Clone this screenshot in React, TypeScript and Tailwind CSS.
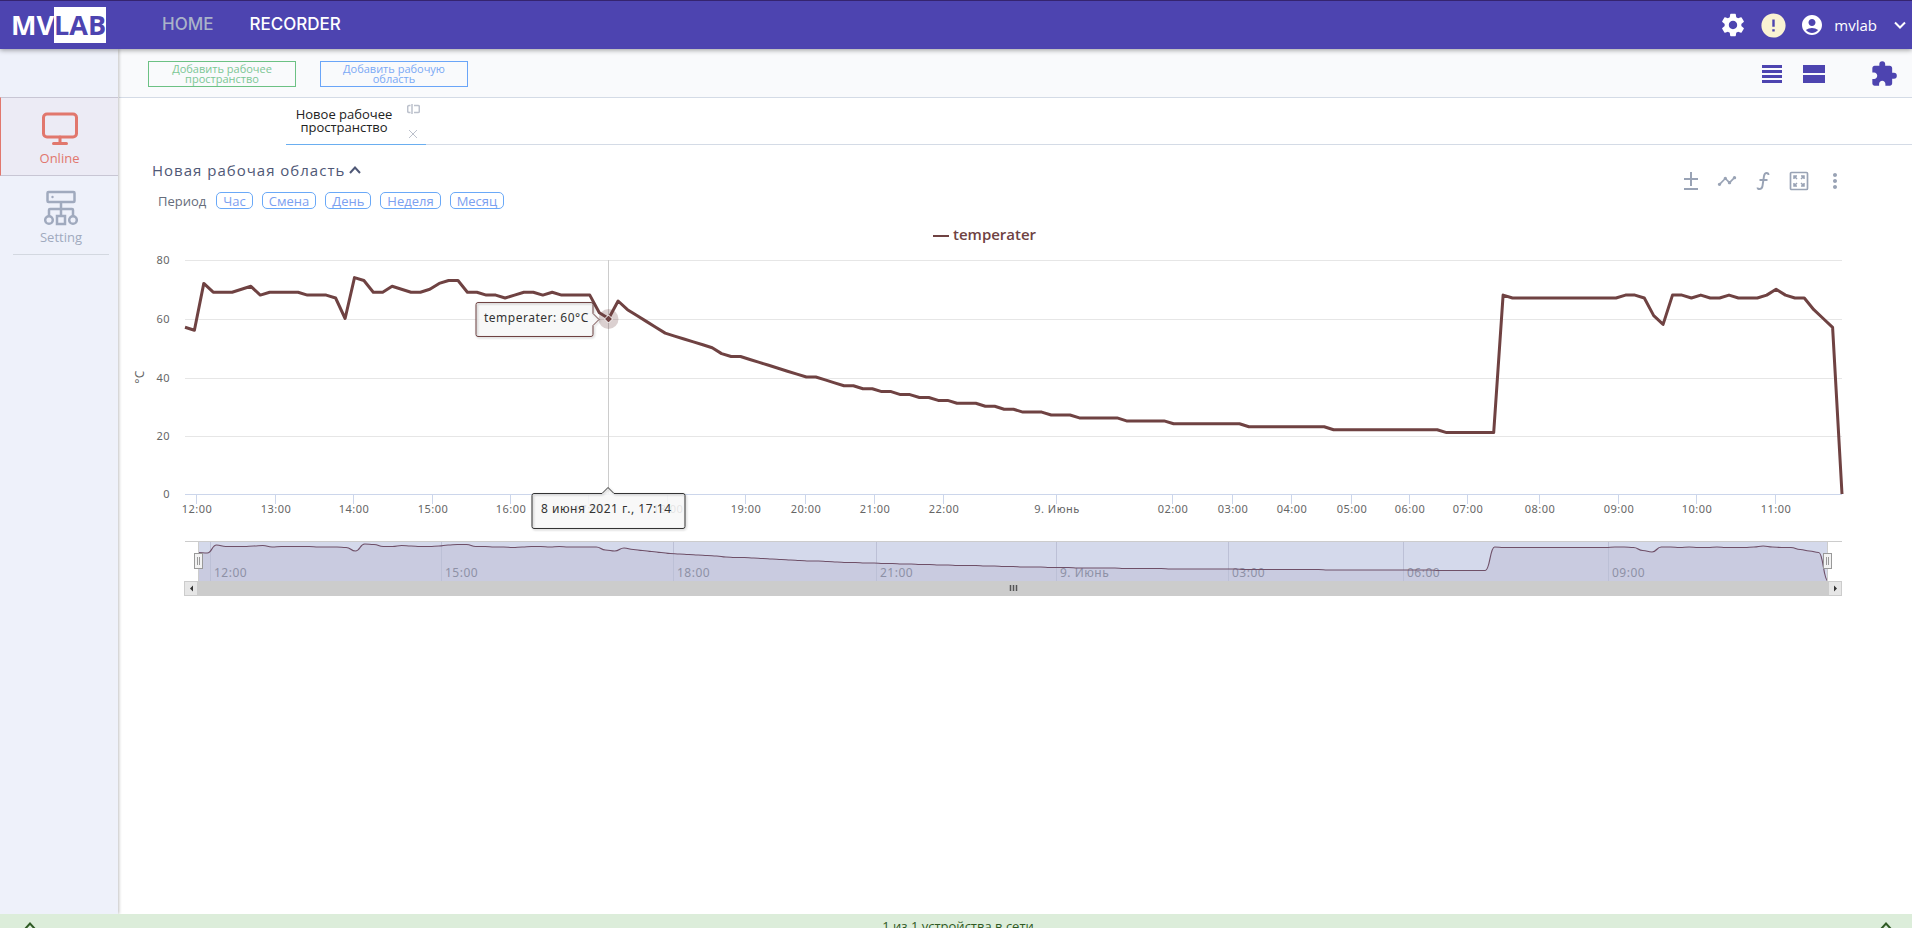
import type { ReactNode } from 'react';
import {
  MdSettings,
  MdError,
  MdAccountCircle,
  MdExtension,
  MdTimeline,
  MdMoreVert,
} from 'react-icons/md';

const PLOT_LEFT = 66;
const PLOT_WIDTH = 1657;
const PLOT_BOTTOM = 274;
const NAV_LEFT = 79;
const NAV_WIDTH = 1630;
const NAV_TOP = 321;
const NAV_BOTTOM = 361;

// [value, how many samples in a row]
const SAMPLES: [number, number][] = [
  [57, 1], [56, 1], [72, 1], [69, 3], [70, 1], [71, 1], [68, 1], [69, 4], [68, 3], [67, 1],
  [60, 1], [74, 1], [73, 1], [69, 2], [71, 1], [70, 1], [69, 2], [70, 1], [72, 1], [73, 2],
  [69, 2], [68, 2], [67, 1], [68, 1], [69, 2], [68, 1], [69, 1], [68, 4], [62, 1], [60, 1],
  [66, 1], [63, 1], [61, 1], [59, 1], [57, 1], [55, 1], [54, 1], [53, 1], [52, 1], [51, 1],
  [50, 1], [48, 1], [47, 2], [46, 1], [45, 1], [44, 1], [43, 1], [42, 1], [41, 1], [40, 2],
  [39, 1], [38, 1], [37, 2], [36, 2], [35, 2], [34, 2], [33, 2], [32, 2], [31, 3], [30, 2],
  [29, 2], [28, 3], [27, 3], [26, 5], [25, 5], [24, 8], [23, 9], [22, 12], [21, 6], [68, 1],
  [67, 12], [68, 2], [67, 1], [61, 1], [58, 1], [68, 2], [67, 1], [68, 1], [67, 2], [68, 1],
  [67, 3], [68, 1], [70, 1], [68, 1], [67, 2], [63, 1], [60, 1], [57, 1], [0, 1],
];

const VALUES = SAMPLES.flatMap(([value, count]) => Array<number>(count).fill(value));

const Y_TICKS = [
  { label: '80', y: 40 },
  { label: '60', y: 99 },
  { label: '40', y: 158 },
  { label: '20', y: 216 },
];

const X_TICKS = [
  { label: '12:00', x: 77 },
  { label: '13:00', x: 156 },
  { label: '14:00', x: 234 },
  { label: '15:00', x: 313 },
  { label: '16:00', x: 391 },
  { label: '17:00', x: 469 },
  { label: '18:00', x: 548 },
  { label: '19:00', x: 626 },
  { label: '20:00', x: 686 },
  { label: '21:00', x: 755 },
  { label: '22:00', x: 824 },
  { label: '9. Июнь', x: 937 },
  { label: '02:00', x: 1053 },
  { label: '03:00', x: 1113 },
  { label: '04:00', x: 1172 },
  { label: '05:00', x: 1232 },
  { label: '06:00', x: 1290 },
  { label: '07:00', x: 1348 },
  { label: '08:00', x: 1420 },
  { label: '09:00', x: 1499 },
  { label: '10:00', x: 1577 },
  { label: '11:00', x: 1656 },
];

const NAV_TICKS = [
  { label: '12:00', x: 91 },
  { label: '15:00', x: 322 },
  { label: '18:00', x: 554 },
  { label: '21:00', x: 757 },
  { label: '9. Июнь', x: 937 },
  { label: '03:00', x: 1109 },
  { label: '06:00', x: 1284 },
  { label: '09:00', x: 1489 },
];

const TOOLTIPS = [
  {
    text: 'temperater: 60°C',
    x: 365,
    y: 102,
    color: '#6f4242',
    box: 'M359 82.5h113q2 0 2 2v9l6 6-6 6v9q0 2-2 2H359q-2 0-2-2v-30q0-2 2-2z',
  },
  {
    text: '8 июня 2021 г., 17:14',
    x: 422,
    y: 293,
    color: '#333',
    box: 'M415 273.5h68l6-6 6 6h69q2 0 2 2v31q0 2-2 2H415q-2 0-2-2v-31q0-2 2-2z',
  },
];

const PERIODS = ['Час', 'Смена', 'День', 'Неделя', 'Месяц'];

function scale(left: number, width: number, bottom: number, unit: number) {
  const step = width / (VALUES.length - 1);
  return VALUES.map((v, i) => [left + i * step, bottom - v * unit]);
}

function linePath(points: number[][]) {
  return 'M' + points.map(([x, y]) => `${x.toFixed(1)} ${y.toFixed(1)}`).join('L');
}

function splinePath(points: number[][]) {
  return points
    .map(([x, y], i) => {
      if (i === 0) return `M${x} ${y}`;
      const [px, py] = points[i - 1];
      const mid = (px + x) / 2;
      return `C${mid} ${py} ${mid} ${y} ${x} ${y}`;
    })
    .join('');
}

function Chevron({ className, down }: { className?: string; down?: boolean }) {
  return (
    <svg viewBox="0 0 12 8" className={className} fill="none" stroke="currentColor" strokeWidth="2">
      <path d={down ? 'M1 1.5l5 5 5-5' : 'M1 7l5-5.5L11 7'} />
    </svg>
  );
}

function MonitorIcon() {
  return (
    <svg viewBox="0 0 36 34" className="h-[34px] w-9" fill="none" stroke="currentColor" strokeWidth="3" strokeLinecap="round">
      <rect x="1.5" y="2" width="33" height="23" rx="3.5" />
      <path d="M18 25v6M11.5 31.5h13" />
    </svg>
  );
}

function NetworkIcon() {
  return (
    <svg viewBox="0 0 34 36" className="h-9 w-[34px]" fill="none" stroke="currentColor" strokeWidth="2.5">
      <rect x="3.5" y="2" width="27" height="10" rx="1" />
      <circle cx="8.5" cy="7" r="1.2" fill="currentColor" stroke="none" />
      <path d="M17 12v14M5 26v-6q0-1 1-1h22q1 0 1 1v6" />
      <circle cx="5" cy="30" r="3.8" />
      <rect x="13" y="26" width="8" height="8" />
      <circle cx="29" cy="30" r="3.8" />
    </svg>
  );
}

function RenameIcon() {
  return (
    <svg viewBox="0 0 13 10" className="h-2.5 w-[13px]" fill="none" stroke="currentColor" strokeWidth="1.5">
      <path d="M3.5 1.5H2Q.7 1.5.7 3v4Q.7 8.5 2 8.5h1.5M7 1.5h4q1.3 0 1.3 1v5q0 1-1.3 1H7M5 0v10" />
    </svg>
  );
}

function SideLink({ label, active, children }: { label: string; active?: boolean; children: ReactNode }) {
  return (
    <a
      href="#"
      className={
        active
          ? 'flex h-[79px] flex-col items-center justify-between border-y border-l border-y-[#c8c6d4] border-l-[#e1776d] bg-[#ecebf5] pt-3.5 pb-[9px] text-[#e1776d]'
          : 'mr-[9px] ml-[13px] flex h-[79px] flex-col items-center justify-between border-b border-[#d3d8e0] pt-3.5 pb-[9px] text-[#a0aabe]'
      }
    >
      {children}
      <span className="text-[13px] leading-4">{label}</span>
    </a>
  );
}

function ToolButton({ label, children }: { label: string; children: ReactNode }) {
  return (
    <button type="button" aria-label={label} className="flex size-5 items-center justify-center">
      {children}
    </button>
  );
}

function Chart() {
  const navPath = splinePath(scale(NAV_LEFT, NAV_WIDTH, NAV_BOTTOM, 0.5));
  return (
    <svg viewBox="0 0 1793 380" className="block w-full font-['Noto_Sans',sans-serif] text-[11px] tracking-[0.5px]">
      {/* legend */}
      <path d="M814 16h16" stroke="#6f4242" strokeWidth="2" />
      <text x="834" y="20" fill="#6f4242" className="font-['Open_Sans',sans-serif] text-[15px] font-semibold tracking-normal">temperater</text>

      {Y_TICKS.map((t) => (
        <g key={t.label}>
          <path d={`M${PLOT_LEFT} ${t.y + 0.5}H1723`} stroke="#e6e6e6" />
          <text x="51" y={t.y + 4} textAnchor="end" fill="#666">{t.label}</text>
        </g>
      ))}
      <text x="51" y="278" textAnchor="end" fill="#666">0</text>
      <text transform="translate(25 157) rotate(-90)" textAnchor="middle" fill="#666" className="text-[12px]">°C</text>
      <path d={`M${PLOT_LEFT} 274.5H1723`} stroke="#ccd6eb" />

      {X_TICKS.map((t) => (
        <g key={t.label}>
          <path d={`M${t.x + 0.5} 275v9`} stroke="#ccd6eb" />
          <text x={t.x + 1} y="293" textAnchor="middle" fill="#666">{t.label}</text>
        </g>
      ))}

      <path d="M489.5 40v234" stroke="#ccc" />
      <path
        d={linePath(scale(PLOT_LEFT, PLOT_WIDTH, PLOT_BOTTOM, 2.925))}
        fill="none"
        stroke="#6f4242"
        strokeWidth="3"
        strokeLinejoin="round"
      />
      <circle cx="489.5" cy="99" r="10" fill="#6f4242" fillOpacity="0.25" />
      <path d="M489.5 95l4 4-4 4-4-4z" fill="#6f4242" stroke="#fff" />

      {TOOLTIPS.map((t) => (
        <g key={t.text}>
          <path d={t.box} fill="#f7f7f7" fillOpacity="0.87" />
          <path d={t.box} fill="none" stroke={t.color} className="drop-shadow-[1px_1px_1px_rgba(0,0,0,0.3)]" />
          <text x={t.x} y={t.y} fill="#333" className="text-[12px]">{t.text}</text>
        </g>
      ))}

      {/* navigator */}
      <rect x={NAV_LEFT} y={NAV_TOP} width={NAV_WIDTH} height="40" fill="#d4d9eb" />
      <path d={`${navPath}H${NAV_LEFT}z`} fill="#c9cbe0" />
      {NAV_TICKS.map((t) => (
        <g key={t.label}>
          <path d={`M${t.x + 0.5} ${NAV_TOP}v40`} stroke="#bcc0d6" />
          <text x={t.x + 4} y="357" fill="#8e91a6" className="text-[12px]">{t.label}</text>
        </g>
      ))}
      <path d={navPath} fill="none" stroke="#6f5068" strokeWidth="1.2" />
      <path d={`M${PLOT_LEFT} 321.5H1723`} stroke="#ccc" />
      <path d="M79.5 321v40M1708.5 321v40" stroke="#ccc" />
      {[79, 1708].map((x) => (
        <g key={x}>
          <rect x={x - 3.5} y="333.5" width="8" height="15" fill="#f2f2f2" stroke="#999" />
          <path d={`M${x - 0.5} 337v8M${x + 1.5} 337v8`} stroke="#999" />
        </g>
      ))}

      {/* scrollbar */}
      <rect x="66" y="361" width="1657" height="15" fill="#ccc" />
      <rect x="65.5" y="361.5" width="13" height="14" fill="#e6e6e6" stroke="#ccc" />
      <rect x="1709.5" y="361.5" width="13" height="14" fill="#e6e6e6" stroke="#ccc" />
      <path d="M74 365.5v6l-3-3zM1715 365.5v6l3-3z" fill="#333" />
      <path d="M891.5 365v6M894.5 365v6M897.5 365v6" stroke="#555" strokeWidth="1.5" />
    </svg>
  );
}

export default function App() {
  return (
    <div className="flex h-screen flex-col overflow-hidden bg-white font-['Open_Sans',sans-serif]">
      <header className="relative z-10 flex h-[49px] shrink-0 items-center border-t border-[#35246f] bg-[#4d44b0] pr-1.5 text-white shadow-[0_1px_5px_rgba(0,0,0,0.4)]">
        <a href="#" className="flex w-[119px] items-center pl-[11px] text-[27px] leading-9 font-bold">
          MV<span className="bg-white text-[#4d44b0]">LAB</span>
        </a>
        <nav className="flex flex-1 gap-9 pl-[43px] font-['Inter',sans-serif] text-[17px] font-medium">
          <a href="#" className="text-[#aab3c9]">HOME</a>
          <a href="#">RECORDER</a>
        </nav>
        <div className="flex items-center">
          <button type="button" aria-label="Settings" className="mr-3"><MdSettings className="size-7" /></button>
          <button type="button" aria-label="Warnings" className="mr-3"><MdError className="size-[29px] text-[#faf3d3]" /></button>
          <MdAccountCircle className="mr-2.5 size-6" />
          <button type="button" className="flex items-center gap-[17px] text-[15px]">
            mvlab
            <Chevron down className="h-2 w-3" />
          </button>
        </div>
      </header>

      <div className="flex min-h-0 flex-1">
        <aside className="relative z-[5] mr-px w-[118px] shrink-0 bg-[#eef1fa] pt-12 shadow-[1px_0_3px_rgba(0,0,0,0.25)]">
          <SideLink label="Online" active><MonitorIcon /></SideLink>
          <SideLink label="Setting"><NetworkIcon /></SideLink>
        </aside>

        <main className="min-w-0 flex-1">
          <div className="flex h-[49px] items-center border-b border-[#d4dbe6] bg-[#f9fafc] pt-px pr-3.5 pl-[29px] text-[11px] leading-[10px]">
            <button type="button" className="h-[26px] w-[148px] border border-[#6cc184] px-5 text-[#7cc795]">
              Добавить рабочее пространство
            </button>
            <button type="button" className="ml-6 h-[26px] w-[148px] border border-[#6aa5f8] px-5 text-[#7ba9f5]">
              Добавить рабочую область
            </button>
            <div className="ml-auto flex items-center text-[#4d44b0]">
              <button type="button" aria-label="List view">
                <svg viewBox="0 0 20 18" className="h-[18px] w-5" fill="currentColor">
                  <path d="M0 0h20v3H0zM0 5h20v3H0zM0 10h20v3H0zM0 15h20v3H0z" />
                </svg>
              </button>
              <button type="button" aria-label="Split view" className="mr-[45px] ml-[21px]">
                <svg viewBox="0 0 22 18" className="h-[18px] w-[22px]" fill="currentColor">
                  <path d="M0 0h22v8H0zM0 10h22v8H0z" />
                </svg>
              </button>
              <button type="button" aria-label="Extensions"><MdExtension className="size-7" /></button>
            </div>
          </div>

          <div className="flex h-[47px] pl-[167px]">
            <div className="flex w-[140px] items-center border-b border-[#6aaef0] pl-2">
              <button type="button" className="w-[100px] text-[13px] leading-[13px] text-[#222]">Новое рабочее пространство</button>
              <div className="ml-1.5 flex h-[34px] flex-1 flex-col items-center justify-between text-[#bcc1cc]">
                <button type="button" aria-label="Rename"><RenameIcon /></button>
                <button type="button" aria-label="Close">
                  <svg viewBox="0 0 8 8" className="size-2" stroke="currentColor"><path d="M0 0l8 8M8 0L0 8" /></svg>
                </button>
              </div>
            </div>
            <div className="flex-1 border-b border-[#d4dbe6]" />
          </div>

          <section>
            <div className="flex justify-between pr-[67px] pl-[33px]">
              <div>
                <h2 className="flex items-center gap-1 pt-[15px] text-[15px] leading-5 tracking-[1px] text-[#4f5876]">
                  Новая рабочая область
                  <Chevron className="h-2 w-3" />
                </h2>
                <div className="mt-3 flex items-center pl-1.5 text-[13px] leading-4 text-[#666d7b]">
                  Период
                  <div className="ml-2.5 flex gap-[9px]">
                    {PERIODS.map((p) => (
                      <button key={p} type="button" className="h-[17px] rounded-[5px] border border-[#6aa9f8] px-1.5 leading-[14px] text-[#7ba0f0]">
                        {p}
                      </button>
                    ))}
                  </div>
                </div>
              </div>
              <div className="flex gap-4 pt-[26px] text-[#99a3b5]">
                <ToolButton label="Extremes">
                  <svg viewBox="0 0 14 18" className="h-[18px] w-3.5" stroke="currentColor" strokeWidth="2"><path d="M7 0v14M0 7h14M0 17h14" /></svg>
                </ToolButton>
                <ToolButton label="Trend"><MdTimeline className="size-5" /></ToolButton>
                <ToolButton label="Function">
                  <svg viewBox="0 0 14 18" className="h-[18px] w-3.5" fill="none" stroke="currentColor" strokeWidth="1.9"><path d="M12.5 3q0-2-1.8-2Q8.5 1 8 4L6.500 14q-.5 3-3 3Q1.500 17 1.500 15.500M3.500 8h8" /></svg>
                </ToolButton>
                <ToolButton label="Fullscreen">
                  <svg viewBox="0 0 18 18" className="size-[18px] overflow-visible" fill="none" stroke="currentColor"><rect x="0.5" y="0.5" width="17" height="17" rx="1" strokeWidth="1.7" /><path d="M4 7V4h3M4 4l3 3M14 7V4h-3M14 4l-3 3M4 11v3h3M4 14l3-3M14 11v3h-3M14 14l-3-3" strokeWidth="1.5" /></svg>
                </ToolButton>
                <ToolButton label="More"><MdMoreVert className="size-6 shrink-0" /></ToolButton>
              </div>
            </div>
            <div className="pt-[11px]"><Chart /></div>
          </section>
        </main>
      </div>

      <footer className="relative z-10 flex h-3.5 shrink-0 items-start justify-between overflow-hidden bg-[#dcedda] pt-2 pr-5 pl-6 text-[#2f5a24]">
        <Chevron className="h-2 w-3 shrink-0" />
        <span className="-mt-1 text-[13px] leading-4">1 из 1 устройства в сети</span>
        <Chevron className="h-2 w-3 shrink-0" />
      </footer>
    </div>
  );
}
